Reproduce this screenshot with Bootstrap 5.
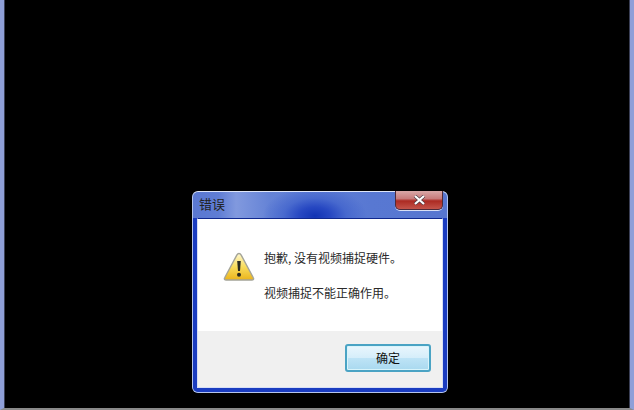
<!DOCTYPE html>
<html lang="zh">
<head>
<meta charset="utf-8">
<title>错误</title>
<link href="https://cdn.jsdelivr.net/npm/bootstrap@5.3.0/dist/css/bootstrap.min.css" rel="stylesheet">
<style>
html,body{height:410px;overflow:hidden;background:#000;}
body{font-family:"Noto Sans CJK SC","Liberation Sans",sans-serif;}
.host-win{position:relative;width:634px;height:410px;background:#000;border-left:4px solid #8f9fd8;border-right:4px solid #8f9fd8;border-bottom:2px solid #8a8a8a;box-shadow:inset 1px 0 0 #3a3f55,inset -1px 0 0 #3a3f55;}
.dlg-win{position:absolute;left:188px;top:191px;width:256px;height:202px;border-radius:6px;padding:0 4px 4px 4px;border:1px solid #b4c4ec;border-top-color:#dfe6f8;
 background:radial-gradient(ellipse 52px 30px at 122px 24px,#1234b4 0%,#2748c2 30%,rgba(64,98,204,.75) 60%,rgba(80,112,212,0) 100%),linear-gradient(90deg,#5a78d2 0%,#5f7dd4 10%,#8199de 17%,#6583d6 30%,#5878d2 70%,#5776d0 100%);
 background-color:#2347c4;}
.dlg-win::after{content:"";position:absolute;left:0;right:0;top:26px;bottom:0;border-radius:0 0 5px 5px;border:4px solid #1a3cc0;border-top:0;pointer-events:none;}
.dlg-title{height:26px;font-size:13px;line-height:24px;color:#222;padding-left:2px;}
.dlg-close{position:absolute;right:4px;top:-1px;width:48px;height:19px;border:1px solid #4e2a38;border-top:0;border-radius:0 0 5px 5px;color:#fff;background:linear-gradient(180deg,#d9a8a8 0%,#c87c7c 42%,#ac2a22 55%,#c4544a 100%);box-shadow:0 1px 0 #d8def4;}
.dlg-pane{position:relative;z-index:1;height:170px;background:#f0f0f0;border:1px solid #d6def5;border-top-color:#10288e;}
.dlg-msg{height:112px;background:#fff;padding:29px 0 0 25px;gap:9px;}
.dlg-icon{margin-top:4px;}
.dlg-text{font-size:12px;line-height:17px;color:#2a2a2a;padding-top:1px;}
.dlg-text p{margin:0 0 18px;}
.dlg-foot{height:56px;padding:13px 11px 0 0;}
.dlg-ok{width:86px;height:28px;padding:0;font-size:12px;line-height:24px;color:#111;border:2px solid #4aa3c4;border-radius:3px;background:linear-gradient(180deg,#e9f6fd 0%,#d6eefa 48%,#bde3f6 52%,#a9d9ef 100%);box-shadow:inset 0 0 0 1px #d8f4fb;}
</style>
</head>
<body>
<div class="host-win">
  <div class="dlg-win">
    <div class="dlg-title">错误</div>
    <div class="dlg-close d-flex align-items-center justify-content-center">
      <svg width="13" height="10" viewBox="0 0 13 10" aria-hidden="true"><path d="M2 1l9 8M11 1L2 9" stroke="#4a3a44" stroke-width="3.400" fill="none"/><path d="M2 1l9 8M11 1L2 9" stroke="#fff" stroke-width="2.200" fill="none"/></svg>
    </div>
    <div class="dlg-pane d-flex flex-column">
      <div class="dlg-msg d-flex align-items-start">
        <svg class="dlg-icon flex-shrink-0" width="32" height="29" viewBox="0 0 32 29" aria-hidden="true">
          <defs><linearGradient id="warnfill" x1="0" y1="0" x2="0" y2="1"><stop offset="0" stop-color="#fff8d0"/><stop offset=".5" stop-color="#f8dc5c"/><stop offset="1" stop-color="#ebb41c"/></linearGradient></defs>
          <path d="M16 1.500c1 0 1.600.6 2.200 1.700l12 22.300c.9 1.500.2 2.500-1.400 2.500H3.200c-1.600 0-2.300-1-1.400-2.500l12-22.300C14.400 2.100 15 1.500 16 1.500z" fill="url(#warnfill)" stroke="#a4a498" stroke-width="1.400"/>
          <path d="M14.200 9h3.600l-.8 10h-2z" fill="#2a2a20"/>
          <circle cx="16" cy="22.800" r="2" fill="#2a2a20"/>
        </svg>
        <div class="dlg-text">
          <p>抱歉, 没有视频捕捉硬件。</p>
          <p>视频捕捉不能正确作用。</p>
        </div>
      </div>
      <div class="dlg-foot d-flex justify-content-end align-items-start">
        <button type="button" class="btn dlg-ok">确定</button>
      </div>
    </div>
  </div>
</div>
<script src="https://cdn.jsdelivr.net/npm/bootstrap@5.3.0/dist/js/bootstrap.bundle.min.js"></script>
</body>
</html>
